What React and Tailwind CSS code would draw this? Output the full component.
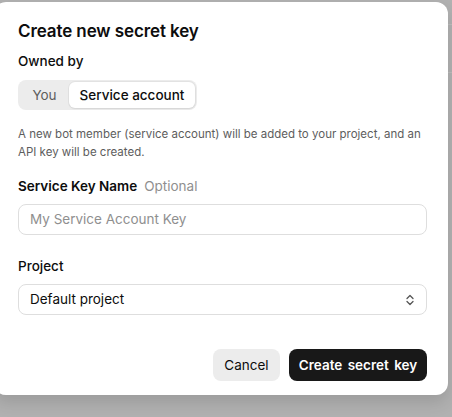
import React from "react";

export default function App() {
  return (
    <div className="relative w-[452px] h-[417px] overflow-hidden bg-[#b1b1b1]" style={{ fontFamily: "Inter, 'Noto Sans', sans-serif" }}>
      <div className="absolute left-[448px] right-0 top-[24px] h-px bg-[#bdbdbd]" />
      <div className="absolute left-[448px] right-0 top-[72px] h-px bg-[#bdbdbd]" />
      <div className="relative ml-[-6px] mt-[2px] w-[454px] h-[393px] rounded-xl bg-white shadow-[0_8px_16px_rgba(0,0,0,0.12)] pl-[24px] pr-[21px] pt-[17px] flex flex-col">
        <div className="text-[17px] leading-[24px] font-semibold text-[#0d0d0d] tracking-[-0.1px]">Create new secret key</div>
        <div className="mt-[8px] text-[13.5px] leading-[20px] font-medium text-[#0d0d0d]">Owned by</div>
        <div className="mt-[9px] flex w-[179px] h-[30px] rounded-lg bg-[#ececec] p-[2px] text-[13.5px]">
          <div className="w-[49px] flex items-center justify-center text-[#5d5d5d]">You</div>
          <div className="flex-1 flex items-center justify-center rounded-md bg-white font-medium text-[#0d0d0d] shadow-[0_0_0_1px_rgba(0,0,0,0.04),0_1px_2px_rgba(0,0,0,0.06)]">Service account</div>
        </div>
        <div className="mt-[15px] text-[11.5px] leading-[18px] text-[#5d5d5d]">
          A new bot member (service account) will be added to your project, and an
          <br />
          API key will be created.
        </div>
        <div className="mt-[15px] text-[13.5px] leading-[20px] flex gap-[7px]">
          <span className="font-semibold text-[#0d0d0d]">Service Key Name</span>
          <span className="text-[#8f8f8f]">Optional</span>
        </div>
        <div className="mt-[8px] h-[31px] w-[409px] rounded-lg border border-[#dedede] flex items-center px-[11px] text-[13.5px] text-[#8f8f8f]">
          My Service Account Key
        </div>
        <div className="mt-[21px] text-[13.5px] leading-[20px] font-medium text-[#0d0d0d]">Project</div>
        <div className="mt-[8px] h-[31px] w-[409px] rounded-lg border border-[#dedede] flex items-center justify-between pl-[11px] pr-[12px] text-[13.5px] text-[#0d0d0d]">
          <span>Default project</span>
          <svg width="8" height="12" viewBox="0 0 8 12" fill="none" stroke="#555" strokeWidth="1.3" strokeLinecap="round" strokeLinejoin="round">
            <path d="M1 4.5 L4 1.5 L7 4.5" />
            <path d="M1 7.5 L4 10.5 L7 7.5" />
          </svg>
        </div>
        <div className="mt-[34px] w-[409px] flex justify-end gap-[9px] text-[13.5px]">
          <div className="h-[32px] w-[67px] rounded-lg bg-[#ececec] flex items-center justify-center text-[#0d0d0d]">Cancel</div>
          <div className="h-[32px] w-[138px] rounded-lg bg-[#181818] flex items-center justify-center font-semibold text-white [word-spacing:2px]">Create secret key</div>
        </div>
      </div>
    </div>
  );
}
